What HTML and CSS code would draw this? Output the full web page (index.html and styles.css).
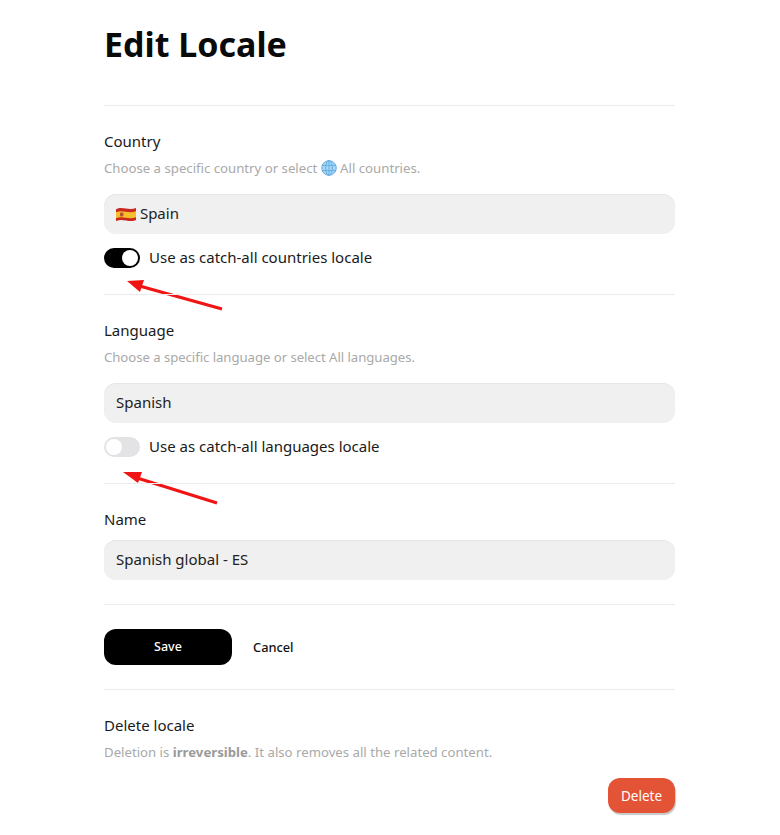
FILE: index.html
```html
<!DOCTYPE html>
<html lang="en">
<head>
<meta charset="utf-8">
<title>Edit Locale</title>
<link rel="stylesheet" href="styles.css">
</head>
<body>
<main class="page">
  <h1 class="title">Edit Locale</h1>
  <section class="section">
    <div class="label">Country</div>
    <p class="help">Choose a specific country or select <svg class="globe" viewBox="0 0 16 16"><circle cx="8" cy="8" r="7.5" fill="#a6d6f6"/><g fill="none" stroke="#5aa6e0" stroke-width=".8"><circle cx="8" cy="8" r="7.3"/><ellipse cx="8" cy="8" rx="3.4" ry="7.3"/><path d="M8 .7v14.6M1 5.4h14M1 10.6h14"/></g></svg> All countries.</p>
    <div class="input"><svg class="flag" viewBox="0 0 20 14"><path d="M0 2.2C3 .6 6 .8 10 1.6s7 .6 10-.6v12c-3 1.2-6 1.4-10 .6s-7-1-10 .6z" fill="#c8281e"/><path d="M0 5.2c3-1.4 6-1.2 10-.4s7 .6 10-.6v6c-3 1.2-6 1.4-10 .6s-7-1-10 .4z" fill="#f6c02c"/><rect x="4" y="5.6" width="3.4" height="3.8" rx=".8" fill="#b5562a"/></svg> Spain</div>
    <div class="toggle-row">
      <span class="toggle toggle-on"></span>
      <span class="toggle-text">Use as catch-all countries locale</span>
    </div>
    <svg class="arrow arrow-one" viewBox="0 0 100 40"><path d="M96 29 10 5" stroke="#f01414" stroke-width="3.2" fill="none"/><path d="M1 1 18 0 14 12z" fill="#f01414"/></svg>
  </section>
  <section class="section">
    <div class="label">Language</div>
    <p class="help help-language">Choose a specific language or select All languages.</p>
    <div class="input">Spanish</div>
    <div class="toggle-row">
      <span class="toggle toggle-off"></span>
      <span class="toggle-text">Use as catch-all languages locale</span>
    </div>
    <svg class="arrow arrow-two" viewBox="0 0 100 40"><path d="M95 32 12 6" stroke="#f01414" stroke-width="3.2" fill="none"/><path d="M1 1 20 1 16 12z" fill="#f01414"/></svg>
  </section>
  <section class="section section-name">
    <div class="label label-tight">Name</div>
    <div class="input">Spanish global - ES</div>
  </section>
  <section class="section actions">
    <button class="btn-save" type="button">Save</button>
    <button class="btn-cancel" type="button">Cancel</button>
  </section>
  <section class="section section-delete">
    <div class="label">Delete locale</div>
    <p class="help help-delete">Deletion is <strong>irreversible</strong>. It also removes all the related content.</p>
    <div class="delete-row"><button class="btn-delete" type="button">Delete</button></div>
  </section>
</main>
</body>
</html>
```
FILE: styles.css
```css
* { box-sizing: border-box; }
html, body { margin: 0; padding: 0; background: #fff; }
body { font-family: "Noto Sans", "Open Sans", sans-serif; color: #111; height: 835px; overflow: hidden; }
.page { width: 571px; margin-left: 104px; padding-top: 19px; }
.title { margin: 0; height: 86px; font-size: 34px; line-height: 50px; font-weight: 700; color: #0a0a0a; }
.section { position: relative; border-top: 1px solid #ececec; padding: 24px 0 26px; height: 189px; }
.section-name { height: 121px; }
.section-delete { height: auto; padding-bottom: 0; }
.label { font-size: 15px; line-height: 22px; margin-bottom: 4px; color: #1a1a1a; }
.label-tight { margin-bottom: 10px; }
.help { margin: 0 0 14px; font-size: 13.2px; line-height: 24px; color: #a9a9a9; }
.help-language { letter-spacing: -0.06px; }
.globe { width: 16px; height: 16px; vertical-align: -3px; }
.flag { width: 20px; height: 14px; vertical-align: -2px; }
.input { height: 40px; padding: 0 12px; border-radius: 12px; background: #f0f0f0; box-shadow: inset 0 1px 1px #e6e6e6; font-size: 15px; line-height: 38px; color: #222; }
.toggle-row { display: flex; align-items: center; gap: 9px; margin-top: 14px; height: 20px; }
.toggle { position: relative; flex: none; width: 36px; height: 20px; border-radius: 10px; }
.toggle::after { content: ""; position: absolute; top: 2px; width: 16px; height: 16px; border-radius: 50%; background: #fff; }
.toggle-on { background: #000; }
.toggle-on::after { right: 2px; }
.toggle-off { background: #e3e3e5; }
.toggle-off::after { left: 2px; }
.toggle-text { font-size: 15px; line-height: 18px; padding-bottom: 2px; color: #1a1a1a; }
.arrow { position: absolute; width: 100px; height: 40px; }
.arrow-one { left: 22px; top: 174px; }
.arrow-two { left: 18px; top: 176px; }
.actions { display: flex; align-items: center; height: 85px; padding: 24px 0; }
.btn-save { width: 128px; height: 36px; padding: 0 0 1px; border: 0; border-radius: 12px; background: #000; color: #fff; font: 500 12.5px "Noto Sans", sans-serif; }
.btn-cancel { margin-left: 21px; padding: 0 0 1px; border: 0; background: none; color: #111; font: 500 12.8px "Noto Sans", sans-serif; }
.help-delete { margin-bottom: 0; }
.help-delete strong { font-weight: 700; color: #9a9a9a; }
.delete-row { display: flex; justify-content: flex-end; margin-top: 14px; }
.btn-delete { width: 67px; height: 35px; padding: 0; border: 0; border-radius: 12px; background: #e35336; color: #fff; font: 400 13.5px "Noto Sans", sans-serif; box-shadow: 1px 2px 1px #c9c9c9; }
```
